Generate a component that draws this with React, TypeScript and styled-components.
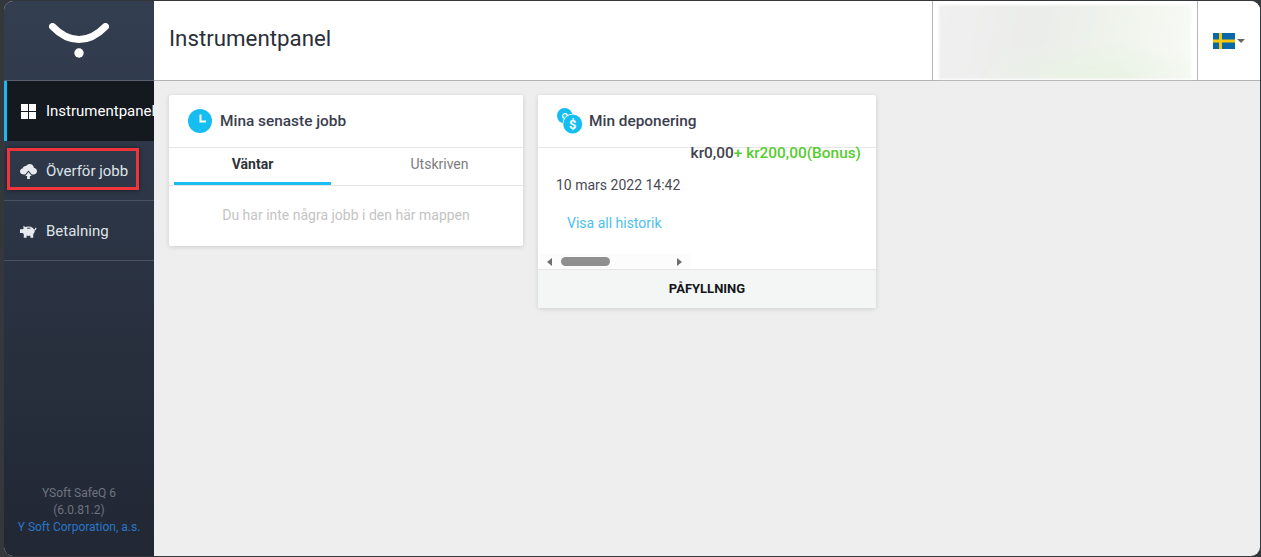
import styled, { createGlobalStyle } from 'styled-components'

const Global = createGlobalStyle`
  html, body { margin: 0; padding: 0; background: #2f2f2f; }
  * { box-sizing: border-box; }
  body { font-family: Roboto, "Liberation Sans", sans-serif; }
`

const Frame = styled.div`
  width: 1261px; height: 557px;
  padding: 1px 1px 1px 4px;
  background: #35383a;
  overflow: hidden;
`
const Win = styled.div`
  display: flex; height: 100%;
  border-radius: 9px;
  overflow: hidden;
  background: #eeeeee;
`
const Sidebar = styled.aside`
  width: 150px; flex-shrink: 0;
  display: flex; flex-direction: column;
  background: linear-gradient(180deg, #333e50 0%, #2c3545 40%, #212733 100%);
`
const LogoBar = styled.div`
  height: 80px; flex-shrink: 0;
  display: flex; align-items: center; justify-content: center;
  padding-right: 1px;
  border-bottom: 1px solid #5a6270;
`
const NavItem = styled.div<{ $active?: boolean }>`
  position: relative;
  height: 60px; flex-shrink: 0;
  display: flex; align-items: center; gap: 9px;
  padding-left: ${p => (p.$active ? '13px' : '16px')};
  padding-top: ${p => (p.$active ? '0' : '1px')};
  border-left: ${p => (p.$active ? '3px solid #1bb8ee' : 'none')};
  border-bottom: ${p => (p.$active ? 'none' : '1px solid #4a515e')};
  background: ${p => (p.$active ? '#14181f' : 'transparent')};
  color: ${p => (p.$active ? '#ffffff' : '#dfe3e8')};
  font-size: 15px;
  white-space: nowrap;
  overflow: hidden;
`
const NavIcon = styled.span`
  width: 17px; height: 17px; flex-shrink: 0;
  display: flex; align-items: center; justify-content: center;
`
const Highlight = styled.div`
  position: absolute;
  left: 3px; top: 7px;
  width: 132px; height: 42px;
  border: 3px solid #f0343c;
  box-shadow: 0 0 5px rgba(0, 0, 0, 0.5);
`
const SideFooter = styled.div`
  margin-top: auto;
  padding-bottom: 20px;
  text-align: center;
  font-size: 12px;
  line-height: 17px;
  color: #6d7480;
`
const FooterLink = styled.div`color: #2a77c9;`

const Main = styled.main`
  flex: 1; min-width: 0;
  display: flex; flex-direction: column;
`
const Header = styled.header`
  height: 80px; flex-shrink: 0;
  display: flex; align-items: stretch;
  background: #ffffff;
  border-bottom: 1px solid #b4b4b4;
`
const PageTitle = styled.h1`
  flex: 1; margin: 0;
  padding-left: 15px;
  font-size: 22.3px; font-weight: 400;
  line-height: 75px;
  color: #2b2f38;
`
const UserBox = styled.div`
  width: 266px;
  padding: 4px 6px 1px 6px;
  border-left: 1px solid #b4b4b4;
  border-right: 1px solid #b4b4b4;
`
const Blurred = styled.div`
  height: 100%;
  background:
    radial-gradient(ellipse 120px 40px at 62% 100%, #e9f3e4 0%, rgba(233, 243, 228, 0) 100%),
    linear-gradient(100deg, #f0f0f0 0%, #ebedea 40%, #eff4ec 70%, #f8fbf6 100%);
  filter: blur(1px);
`
const Lang = styled.div`
  width: 62px;
  display: flex; align-items: center;
  padding: 0 0 0 15px;
  gap: 2px;
`
const Caret = styled.span`
  width: 0; height: 0;
  margin-top: 1px;
  border-left: 4px solid transparent;
  border-right: 4px solid transparent;
  border-top: 4px solid #666666;
`

const Content = styled.div`
  flex: 1;
  display: flex; align-items: flex-start; gap: 15px;
  padding: 14px 15px;
`
const Card = styled.section<{ $w: number }>`
  width: ${p => p.$w}px;
  background: #ffffff;
  border-radius: 2px;
  box-shadow: 0 1px 5px rgba(0, 0, 0, 0.14);
`
const CardHead = styled.div`
  height: 53px;
  display: flex; align-items: center; gap: 8px;
  padding-left: 19px;
  border-bottom: 1px solid #e6e6e8;
  font-size: 15.4px; font-weight: 500;
  color: #3b3e4e;
`
const Tabs = styled.div`
  display: flex;
  height: 38px;
  border-bottom: 1px solid #e6e6e8;
  padding-left: 5px;
`
const Tab = styled.div<{ $active?: boolean }>`
  width: 157px;
  height: 37px;
  display: flex; justify-content: center; align-items: center;
  padding-bottom: 3px;
  font-size: 14px;
  font-weight: ${p => (p.$active ? 700 : 400)};
  color: ${p => (p.$active ? '#2f3238' : '#7d7d80')};
  border-bottom: ${p => (p.$active ? '3px solid #1bbcf0' : '3px solid transparent')};
`
const TabGap = styled.div`width: 30px;`
const Empty = styled.div`
  height: 60px;
  padding-bottom: 2px;
  display: flex; align-items: center; justify-content: center;
  font-size: 14px;
  color: #c4c4c4;
`
const Amounts = styled.div`
  height: 0;
  display: flex; justify-content: flex-end;
  padding-right: 15px;
  font-size: 15.4px; font-weight: 500;
  line-height: 11px;
  color: #42434f;
`
const Bonus = styled.span`color: #56cc2f;`
const Body = styled.div`height: 106px; padding: 29px 0 0 18px;`
const DateText = styled.div`font-size: 14px; line-height: 16px; color: #4a4a55;`
const HistoryLink = styled.div`
  margin: 22px 0 0 11px;
  font-size: 14px; line-height: 16px;
  color: #4cc0ee;
`
const ScrollTrack = styled.div`
  width: 151px; height: 15px;
  margin-left: 2px;
  display: flex; align-items: center;
  padding: 0 9px 0 7px;
  background: #fcfcfc;
`
const Thumb = styled.div`
  width: 49px; height: 9px;
  margin: 0 auto 0 9px;
  border-radius: 5px;
  background: #8f8f8f;
`
const ArrowL = styled.span`
  width: 0; height: 0;
  border-top: 4px solid transparent;
  border-bottom: 4px solid transparent;
  border-right: 5px solid #6f6f6f;
`
const ArrowR = styled.span`
  width: 0; height: 0;
  border-top: 4px solid transparent;
  border-bottom: 4px solid transparent;
  border-left: 5px solid #6f6f6f;
`
const CardFoot = styled.div`
  height: 39px;
  padding-bottom: 2px;
  display: flex; align-items: center; justify-content: center;
  background: #f4f6f6;
  border-top: 1px solid #e6e6e8;
  border-radius: 0 0 2px 2px;
  font-size: 13px; font-weight: 700;
  color: #15161a;
`

const Logo = () => (
  <svg width="60" height="36" viewBox="0 0 60 36">
    <path d="M3.5 3.5 Q16 16.5 30 16.5 Q44 16.5 56.5 3.5" fill="none" stroke="#fff" strokeWidth="7" strokeLinecap="round" />
    <circle cx="30" cy="30" r="4.7" fill="#fff" />
  </svg>
)

const GridIcon = () => (
  <svg width="15" height="15" viewBox="0 0 15 15">
    <path fill="#fff" d="M0 0h7v7H0zM8 0h7v7H8zM0 8h7v7H0zM8 8h7v7H8z" />
  </svg>
)

const CloudUp = () => (
  <svg width="17" height="15" viewBox="0 0 17 15">
    <path fill="#e6e9ee" d="M4 10.5C1.7 10.5 0 9.2 0 7.4c0-1.5 1-2.6 2.6-2.9C3 2.6 4.5 1.7 6 2 7 .7 8.3 0 9.7 0c2.2 0 4 1.5 4.2 3.7C15.7 4.1 17 5.5 17 7.3c0 1.9-1.5 3.2-3.5 3.2h-1.7L8.5 6.5 5.2 10.5z" />
    <path fill="#e6e9ee" d="M8.5 8 11.7 12H9.9v3H7.1v-3H5.3z" />
  </svg>
)

const Piggy = () => (
  <svg width="18" height="13" viewBox="0 0 18 13">
    <ellipse cx="9" cy="6.2" rx="6.5" ry="5" fill="#e6e9ee" />
    <path fill="#e6e9ee" d="M0 4h4V8H0zM3.5 0.5 7 2.5 4 5zM4 9h3v4H4zM11 9h3v4h-3z" />
    <path d="M15 5C16.5 5 17 3.5 16.5 2.5" fill="none" stroke="#e6e9ee" strokeWidth="1.3" />
    <path d="M7.5 3H11" stroke="#2c3545" strokeWidth="1" />
  </svg>
)

const ClockBadge = () => (
  <svg width="24" height="24" viewBox="0 0 24 24">
    <circle cx="12" cy="12" r="12" fill="#16bdf0" />
    <path d="M12.5 5.5V12.5H18" fill="none" stroke="#fff" strokeWidth="2" />
  </svg>
)

const CoinsBadge = () => (
  <svg width="24" height="26" viewBox="0 0 24 26" overflow="visible">
    <circle cx="7.7" cy="7.7" r="7.7" fill="#16bdf0" />
    <circle cx="8" cy="8" r="2.3" fill="none" stroke="#fff" strokeWidth="1.3" />
    <circle cx="15.7" cy="16" r="10.3" fill="#fff" />
    <circle cx="15.7" cy="16" r="9.5" fill="#16bdf0" />
    <text x="15.7" y="20.5" textAnchor="middle" fontSize="13" fontWeight="700" fill="#fff" fontFamily="Roboto, sans-serif">$</text>
  </svg>
)

const SwedishFlag = () => (
  <svg width="22" height="16" viewBox="0 0 22 16">
    <rect width="22" height="16" fill="#0a68a8" />
    <rect x="6" width="3" height="16" fill="#f4c80c" />
    <rect y="6.5" width="22" height="3" fill="#f4c80c" />
  </svg>
)

export default function App() {
  return (
    <Frame>
      <Global />
      <Win>
        <Sidebar>
          <LogoBar><Logo /></LogoBar>
          <NavItem $active>
            <NavIcon><GridIcon /></NavIcon>
            Instrumentpanel
          </NavItem>
          <NavItem>
            <NavIcon><CloudUp /></NavIcon>
            Överför jobb
            <Highlight />
          </NavItem>
          <NavItem>
            <NavIcon><Piggy /></NavIcon>
            Betalning
          </NavItem>
          <SideFooter>
            <div>YSoft SafeQ 6</div>
            <div>(6.0.81.2)</div>
            <FooterLink>Y Soft Corporation, a.s.</FooterLink>
          </SideFooter>
        </Sidebar>
        <Main>
          <Header>
            <PageTitle>Instrumentpanel</PageTitle>
            <UserBox><Blurred /></UserBox>
            <Lang><SwedishFlag /><Caret /></Lang>
          </Header>
          <Content>
            <Card $w={354}>
              <CardHead><ClockBadge />Mina senaste jobb</CardHead>
              <Tabs>
                <Tab $active>Väntar</Tab>
                <TabGap />
                <Tab>Utskriven</Tab>
              </Tabs>
              <Empty>Du har inte några jobb i den här mappen</Empty>
            </Card>
            <Card $w={338}>
              <CardHead><CoinsBadge />Min deponering</CardHead>
              <Amounts>kr0,00<Bonus>+ kr200,00(Bonus)</Bonus></Amounts>
              <Body>
                <DateText>10 mars 2022 14:42</DateText>
                <HistoryLink>Visa all historik</HistoryLink>
              </Body>
              <ScrollTrack><ArrowL /><Thumb /><ArrowR /></ScrollTrack>
              <CardFoot>PÅFYLLNING</CardFoot>
            </Card>
          </Content>
        </Main>
      </Win>
    </Frame>
  )
}
